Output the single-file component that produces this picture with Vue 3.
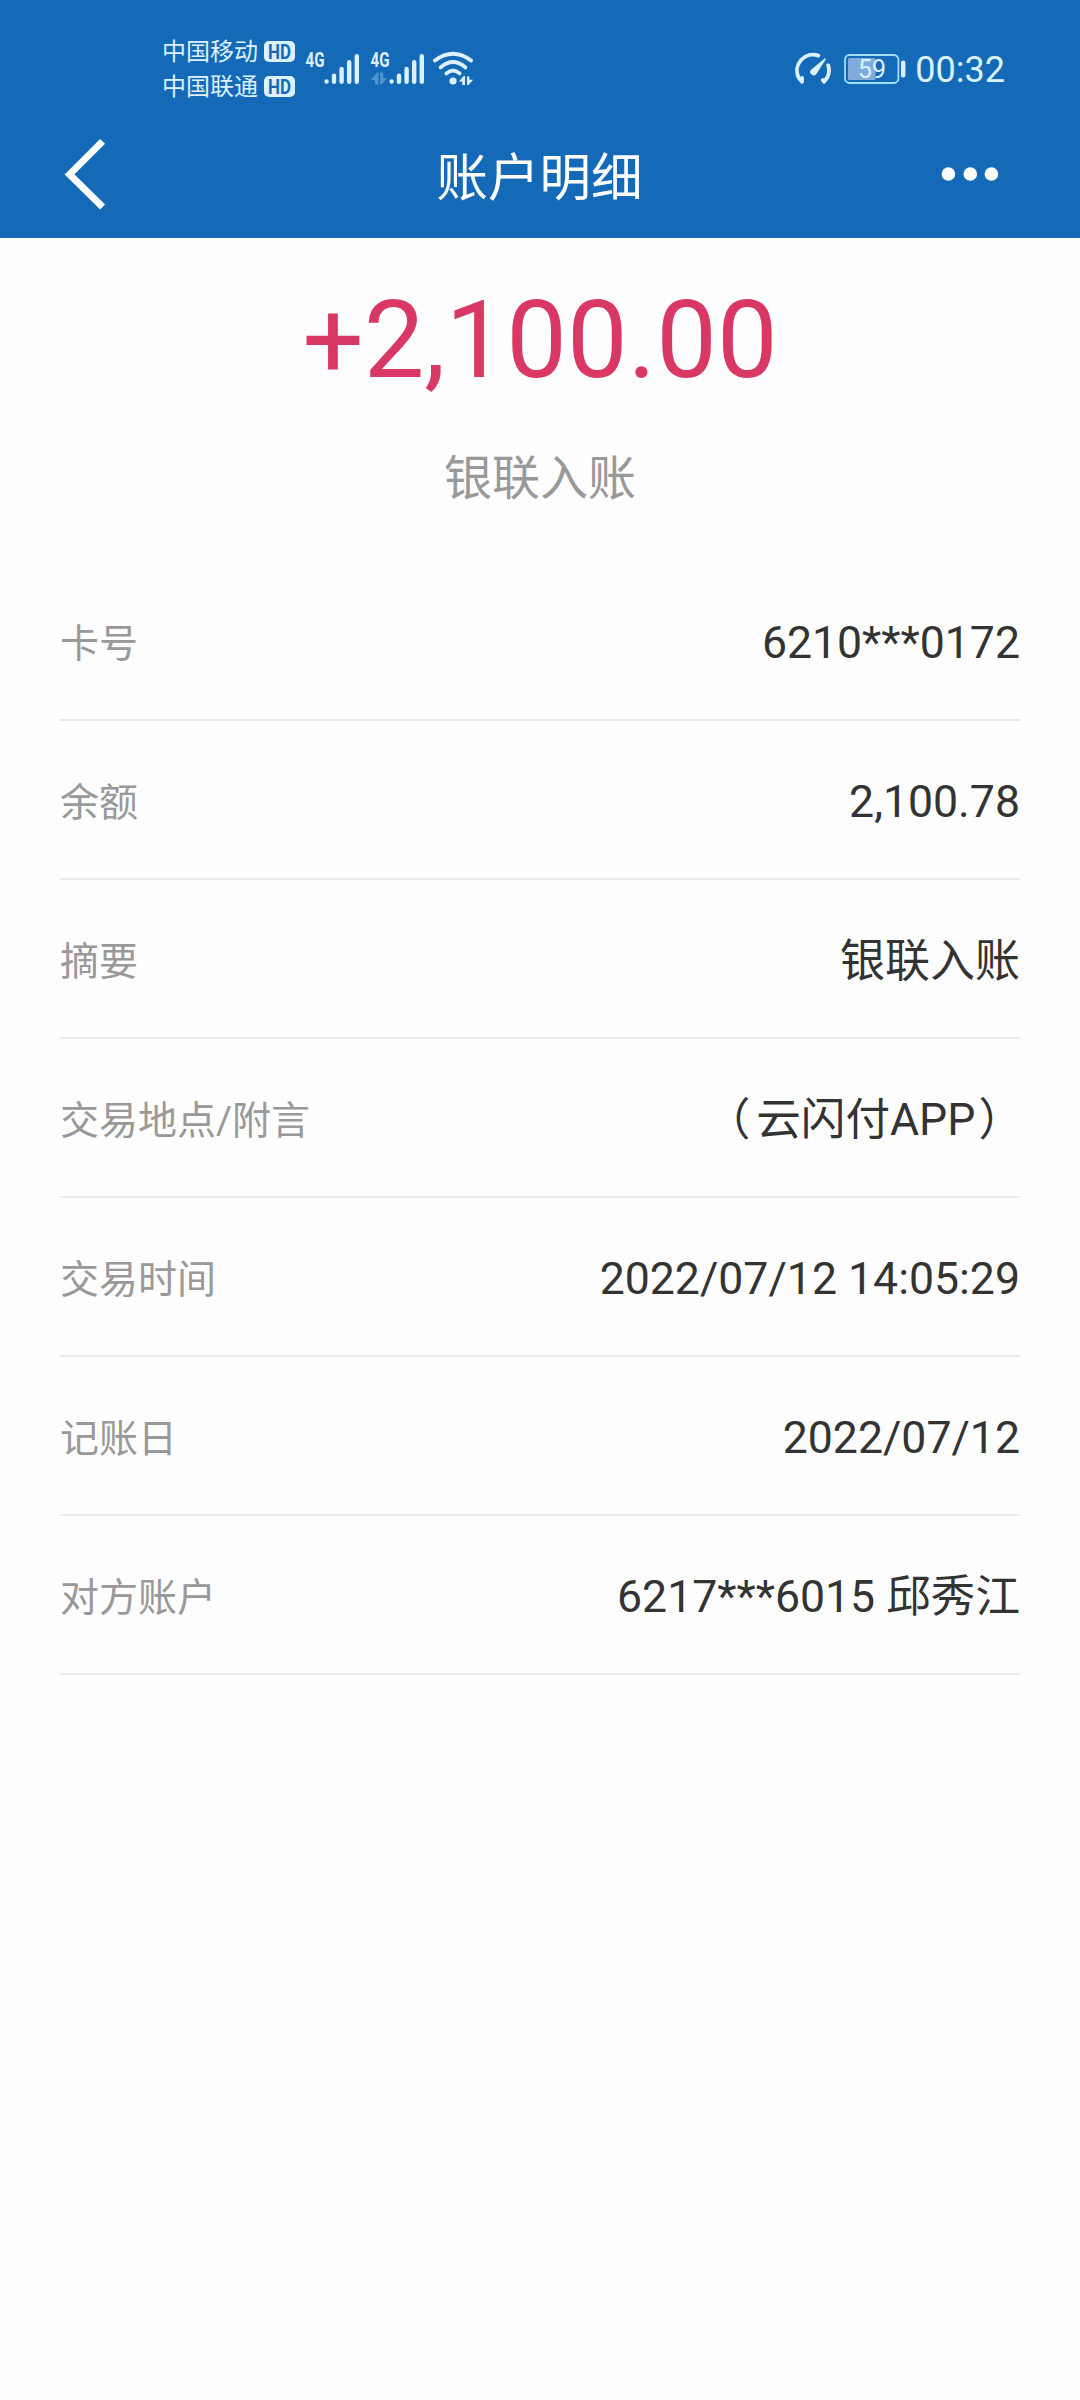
<template>
  <div class="page">
    <header class="top">
      <div class="status-bar">
        <div class="carriers">
          <div v-for="name in carriers" :key="name" class="carrier">
            <span class="carrier-name">{{ name }}</span>
            <svg class="hd" viewBox="0 0 31 21">
              <rect width="31" height="21" rx="5" fill="#dcf1ff" />
              <text x="4" y="17.5" textLength="23" lengthAdjust="spacingAndGlyphs">HD</text>
            </svg>
          </div>
        </div>

        <svg v-for="n in 2" :key="n" class="signal" viewBox="0 0 55 46">
          <text class="net" x="0.5" y="20.5" textLength="19" lengthAdjust="spacingAndGlyphs">4G</text>
          <g v-if="n === 2" fill="#dcf1ff" opacity="0.3">
            <path d="M1 34L7 26.4h1.4v12H5V34z" />
            <path d="M10 26.4h3.2V32H17l-5.4 6.4H10z" />
          </g>
          <g stroke="#dcf1ff" stroke-width="4.4" stroke-linecap="round">
            <path d="M21.6 35.4v.2M29 29.6v6.2M36.6 23v12.8M44.2 16.2v19.6M51.8 10.2v25.6" />
          </g>
        </svg>

        <svg class="wifi" viewBox="0 0 42 36">
          <g fill="none" stroke="#dcf1ff" stroke-width="3.8" stroke-linecap="round">
            <path d="M3 9.6Q21 -4 39 9.6" />
            <path d="M8.6 16.4Q21 5.6 33.4 16.4" />
            <path d="M14.4 22.4Q21 16.4 27.6 22.4" />
          </g>
          <circle cx="21" cy="30" r="3.6" fill="#dcf1ff" />
          <path d="M27 30.4l4.6-5.4H33v9h-2.8v-3.6z" fill="#dcf1ff" />
          <path d="M35 25.4h2.4v3.4h3.8L36.4 34H35z" fill="#dcf1ff" />
        </svg>

        <div class="status-right">
          <svg class="gauge" viewBox="0 0 38 34">
            <g fill="none" stroke="#dcf1ff" stroke-width="3.8" stroke-linecap="round" stroke-linejoin="round">
              <path d="M24.4 3.6A16 16 0 0 0 4.6 25.6L8 29.8V26" />
              <path d="M34.2 13.4A16 16 0 0 1 33.2 25.6L30 29.8L28.8 28" />
            </g>
            <path d="M31 6.2L32 7L22.4 22A3.4 3.4 0 1 1 17 17.8z" fill="#dcf1ff" />
          </svg>
          <svg class="battery" viewBox="0 0 62 30">
            <rect x="1" y="1" width="53.4" height="28" rx="4.5" fill="none" stroke="#a5dcfb" stroke-width="1.8" />
            <rect x="4" y="4" width="27.5" height="22" rx="1.5" fill="#7facdc" />
            <rect x="57" y="6.4" width="4.4" height="17" rx="2" fill="#dcf1ff" />
            <text x="14" y="24" textLength="28" lengthAdjust="spacingAndGlyphs">59</text>
          </svg>
          <span class="clock">00:32</span>
        </div>
      </div>

      <nav class="nav-bar">
        <svg class="back" viewBox="0 0 44 74">
          <path d="M38.6 4.4L5.6 37.4L38.6 70" fill="none" stroke="#fff" stroke-width="7" />
        </svg>
        <h1 class="title">账户明细</h1>
        <svg class="more" viewBox="0 0 58 16">
          <circle cx="7.4" cy="8" r="6.8" />
          <circle cx="29.3" cy="8" r="6.8" />
          <circle cx="50.4" cy="8" r="6.8" />
        </svg>
      </nav>
    </header>

    <section class="summary">
      <div class="amount">+2,100.00</div>
      <div class="kind">银联入账</div>
    </section>

    <ul class="details">
      <li v-for="row in rows" :key="row.label" class="row">
        <span class="label">{{ row.label }}</span>
        <span v-if="row.note" class="value"><span class="paren-open">（</span>{{ row.note }}<span class="paren-close">）</span></span>
        <span v-else class="value" :class="{ cjk: row.cjk }">{{ row.value }}</span>
      </li>
    </ul>
  </div>
</template>

<script setup>
const carriers = ['中国移动', '中国联通']

const rows = [
  { label: '卡号', value: '6210***0172' },
  { label: '余额', value: '2,100.78' },
  { label: '摘要', value: '银联入账', cjk: true },
  { label: '交易地点/附言', note: '云闪付APP' },
  { label: '交易时间', value: '2022/07/12 14:05:29' },
  { label: '记账日', value: '2022/07/12' },
  { label: '对方账户', value: '6217***6015 邱秀江' }
]
</script>

<style>
body {
  background: #fefefe;
}
</style>

<style scoped>
.page {
  width: 1080px;
  min-height: 2400px;
  background: #fefefe;
  font-family: Roboto, 'Noto Sans CJK SC', sans-serif;
  color: #333;
}
.top {
  height: 238px;
  background: #146ab7;
  color: #fff;
}

/* status bar */
.status-bar {
  display: flex;
  align-items: center;
  height: 138px;
  padding: 0 75px 0 162px;
  color: #dcf1ff;
}
.carriers {
  display: flex;
  flex-direction: column;
  width: 143px;
}
.carrier {
  display: flex;
  align-items: center;
  gap: 6px;
  height: 35px;
}
.carrier-name {
  width: 96px;
  padding-top: 2px;
  font-size: 24px;
  line-height: 35px;
  white-space: nowrap;
}
.hd {
  width: 31px;
  height: 21px;
}
.hd text {
  font-size: 20px;
  font-weight: 700;
  fill: #146ab7;
}
.signal {
  width: 55px;
  height: 46px;
  margin-right: 10px;
}
.net {
  font-size: 20px;
  font-weight: 700;
  fill: #dcf1ff;
}
.wifi {
  width: 42px;
  height: 36px;
  margin-left: -3px;
}
.status-right {
  display: flex;
  align-items: center;
  margin-left: auto;
}
.gauge {
  width: 38px;
  height: 34px;
  margin-right: 12px;
}
.battery {
  width: 62px;
  height: 30px;
  margin-right: 9px;
}
.battery text {
  font-size: 26px;
  fill: #dcf1ff;
}
.clock {
  padding-top: 2px;
  font-size: 36px;
  line-height: 44px;
}

/* nav bar */
.nav-bar {
  display: grid;
  grid-template-columns: 1fr auto 1fr;
  align-items: center;
  height: 72px;
  padding: 0 81px 0 64px;
}
.back {
  width: 44px;
  height: 74px;
  margin: -1px 0;
}
.title {
  margin: 0 -8px 0 8px;
  padding-top: 10px;
  font-size: 51.5px;
  font-weight: 400;
  line-height: 62px;
}
.more {
  width: 58px;
  height: 16px;
  justify-self: end;
  fill: #fff;
}

/* amount */
.summary {
  height: 324px;
  padding-top: 39px;
  box-sizing: border-box;
  text-align: center;
}
.amount {
  font-size: 108px;
  line-height: 126px;
  color: #da3864;
}
.kind {
  margin-top: 41px;
  font-size: 48px;
  line-height: 70px;
  color: #999;
}

/* detail rows */
.details {
  margin: 0;
  padding: 0 60px;
  list-style: none;
}
.row {
  display: flex;
  align-items: center;
  justify-content: space-between;
  height: 159px;
  box-sizing: border-box;
  border-bottom: 2px solid #ebebeb;
}
.label {
  padding-top: 6px;
  font-size: 39px;
  line-height: 58px;
  color: #999;
}
.value {
  padding-top: 4px;
  font-size: 44.6px;
  line-height: 66px;
  white-space: nowrap;
}
.value.cjk {
  padding-top: 6px;
  font-size: 45px;
}
.paren-open {
  margin: 0 6px 0 -6px;
}
.paren-close {
  margin: 0 -3px 0 3px;
}
</style>
